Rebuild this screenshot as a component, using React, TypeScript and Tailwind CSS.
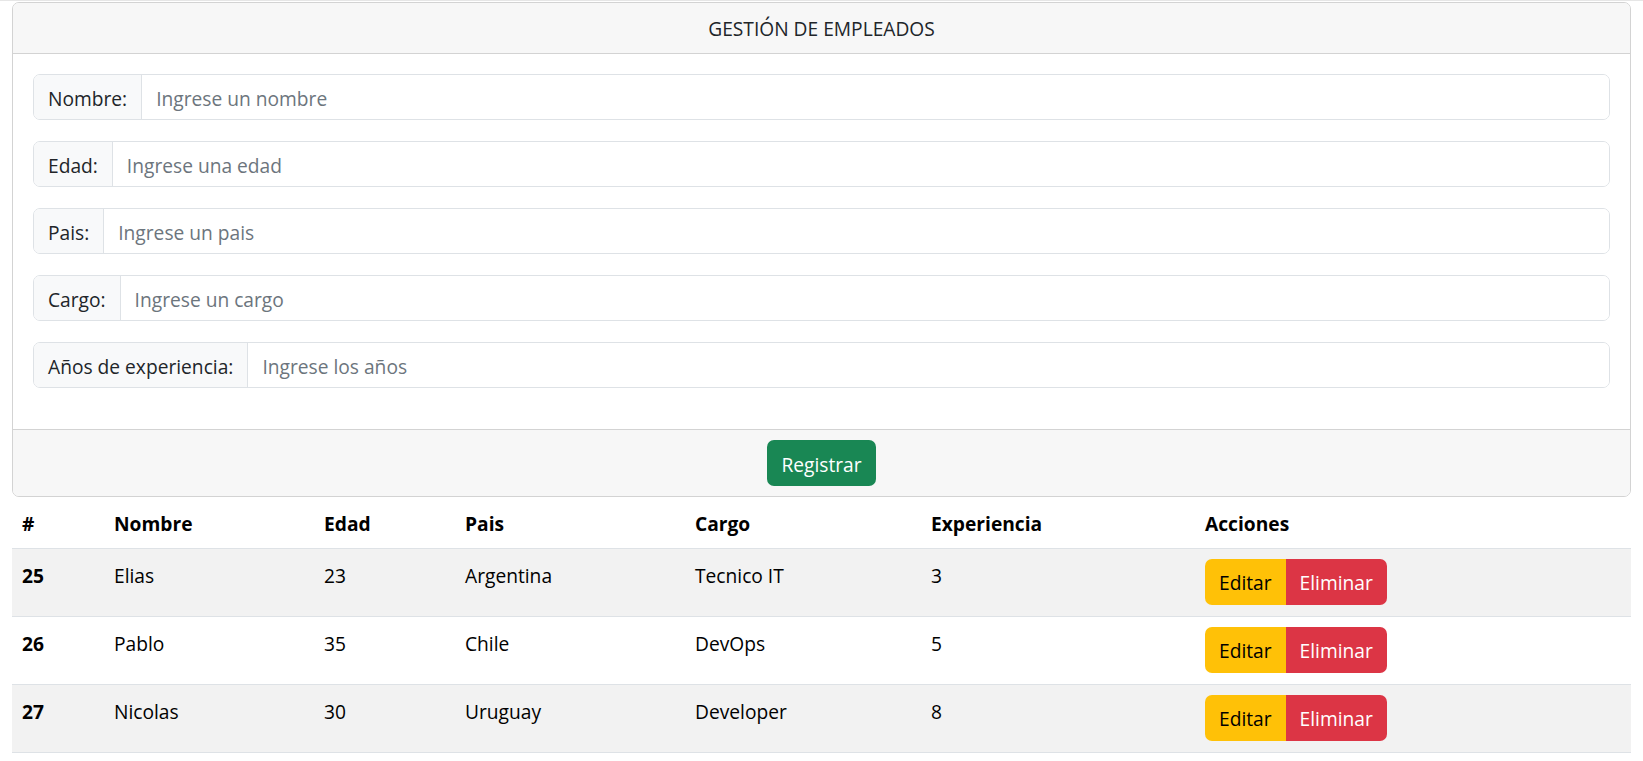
import React from "react";

const fields = [
  { label: "Nombre:", placeholder: "Ingrese un nombre" },
  { label: "Edad:", placeholder: "Ingrese una edad" },
  { label: "Pais:", placeholder: "Ingrese un pais" },
  { label: "Cargo:", placeholder: "Ingrese un cargo" },
  { label: "Años de experiencia:", placeholder: "Ingrese los años" },
];

const rows = [
  { id: 25, nombre: "Elias", edad: 23, pais: "Argentina", cargo: "Tecnico IT", exp: 3 },
  { id: 26, nombre: "Pablo", edad: 35, pais: "Chile", cargo: "DevOps", exp: 5 },
  { id: 27, nombre: "Nicolas", edad: 30, pais: "Uruguay", cargo: "Developer", exp: 8 },
];

const cols = [92, 210, 141, 230, 236, 274];

export default function App() {
  return (
    <div
      className="min-h-[761px] bg-white text-[19.2px] leading-[28.8px] text-[#212529]"
      style={{ fontFamily: '"Open Sans", "Noto Sans", sans-serif' }}
    >
      <div className="h-px bg-[#e6e6e6]" />
      <div className="px-[12px] pt-px">
        <div className="rounded-[7px] border border-[#d3d3d3] overflow-hidden">
          <div className="h-[51px] pt-[2px] bg-[#f7f7f7] border-b border-[#d3d3d3] flex items-center justify-center">
            GESTIÓN DE EMPLEADOS
          </div>
          <div className="px-[20px] pt-[20px] pb-[20px] bg-white">
            {fields.map((f) => (
              <div
                key={f.label}
                className="flex h-[46px] mb-[21px] rounded-[7px] border border-[#dee2e6] overflow-hidden"
              >
                <div className="flex items-center px-[14px] pt-[4px] bg-[#f8f9fa] border-r border-[#dee2e6] whitespace-nowrap">
                  {f.label}
                </div>
                <input
                  className="flex-1 px-[14px] pt-[4px] outline-none bg-white placeholder:text-[#6c757d] text-[#212529]"
                  placeholder={f.placeholder}
                />
              </div>
            ))}
          </div>
          <div className="bg-[#f7f7f7] border-t border-[#d3d3d3] flex justify-center py-[10px]">
            <button className="h-[46px] px-[14px] pt-[4px] rounded-[7px] bg-[#198754] text-white">
              Registrar
            </button>
          </div>
        </div>

        <table className="w-full table-fixed border-collapse text-black">
          <colgroup>
            {cols.map((w, i) => (
              <col key={i} style={{ width: w }} />
            ))}
            <col />
          </colgroup>
          <thead>
            <tr className="border-b border-[#dee2e6]">
              {["#", "Nombre", "Edad", "Pais", "Cargo", "Experiencia", "Acciones"].map((h) => (
                <th key={h} className="text-left font-bold px-[10px] pt-[13px] pb-[9px] align-top">
                  {h}
                </th>
              ))}
            </tr>
          </thead>
          <tbody>
            {rows.map((r, i) => (
              <tr
                key={r.id}
                className={`border-b border-[#dee2e6] ${i % 2 === 0 ? "bg-[#f2f2f2]" : "bg-white"}`}
              >
                <td className="px-[10px] pt-[13px] align-top font-bold">{r.id}</td>
                <td className="px-[10px] pt-[13px] align-top">{r.nombre}</td>
                <td className="px-[10px] pt-[13px] align-top">{r.edad}</td>
                <td className="px-[10px] pt-[13px] align-top">{r.pais}</td>
                <td className="px-[10px] pt-[13px] align-top">{r.cargo}</td>
                <td className="px-[10px] pt-[13px] align-top">{r.exp}</td>
                <td className="px-[10px] pt-[10px] pb-[11px] align-top">
                  <div className="flex">
                    <button className="h-[46px] px-[14px] pt-[4px] bg-[#ffc107] text-black rounded-l-[7px]">
                      Editar
                    </button>
                    <button className="h-[46px] px-[14px] pt-[4px] bg-[#dc3545] text-white rounded-r-[7px]">
                      Eliminar
                    </button>
                  </div>
                </td>
              </tr>
            ))}
          </tbody>
        </table>
      </div>
    </div>
  );
}
